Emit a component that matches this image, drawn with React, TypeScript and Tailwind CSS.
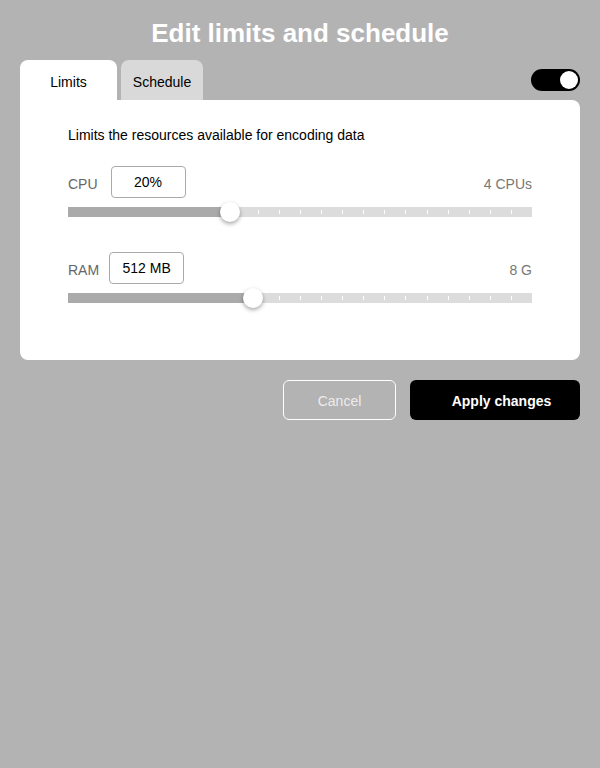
import React, { useState } from 'react'

interface LimitSlider {
    label: string
    value: string
    max: string
    position: number
    inputGap: string
}

const sliders: LimitSlider[] = [
    { label: 'CPU', value: '20%', max: '4 CPUs', position: 0.349, inputGap: 'ml-[13px]' },
    { label: 'RAM', value: '512 MB', max: '8 G', position: 0.399, inputGap: 'ml-[10px]' },
]

const TICKS = 22

function Slider({ position }: { position: number }) {
    return (
        <div className="relative h-[10px] w-full bg-[#dcdcdc]">
            <div className="absolute left-0 top-0 h-full bg-[#aaaaaa]" style={{ width: `${position * 100}%` }} />
            {Array.from({ length: TICKS - 1 }).map((_, i) => {
                const p = (i + 1) / TICKS
                if (p <= position + 0.02) return null
                return (
                    <span
                        key={i}
                        className="absolute top-[3px] h-[4px] w-px bg-white"
                        style={{ left: `${p * 100}%` }}
                    />
                )
            })}
            <span
                className="absolute top-1/2 h-5 w-5 -translate-x-1/2 -translate-y-1/2 rounded-full bg-white shadow-[0_2px_4px_rgba(0,0,0,0.35)]"
                style={{ left: `${position * 100}%` }}
            />
        </div>
    )
}

export default function App() {
    const [tab, setTab] = useState<'limits' | 'schedule'>('limits')
    const [enabled, setEnabled] = useState(true)

    return (
        <div className="min-h-[768px] w-full bg-[#b3b3b3] px-5 pt-[17px] font-['Liberation_Sans',Arial,sans-serif]">
            <h1 className="mb-[11px] text-center text-[26px] font-bold leading-8 text-white">Edit limits and schedule</h1>

            {/* Tabs + toggle */}
            <div className="flex items-center justify-between">
                <div className="flex gap-1">
                    <button
                        onClick={() => setTab('limits')}
                        className={`h-10 w-[97px] rounded-t-lg pt-[3px] text-sm text-black ${tab === 'limits' ? 'bg-white' : 'bg-[#d9d9d9]'}`}
                    >
                        Limits
                    </button>
                    <button
                        onClick={() => setTab('schedule')}
                        className={`h-10 w-[82px] rounded-t-lg pt-[3px] text-sm text-black ${tab === 'schedule' ? 'bg-white' : 'bg-[#d9d9d9]'}`}
                    >
                        Schedule
                    </button>
                </div>
                <button
                    onClick={() => setEnabled(!enabled)}
                    className={`flex h-[22px] w-[49px] items-center rounded-full bg-black px-[2px] ${enabled ? 'justify-end' : 'justify-start'}`}
                >
                    <span className="h-[18px] w-[18px] rounded-full bg-white" />
                </button>
            </div>

            {/* Card */}
            <div className="rounded-b-lg rounded-tr-lg bg-white px-12 pb-[57px] pt-[25px]">
                <p className="text-sm leading-5 text-black">Limits the resources available for encoding data</p>

                {sliders.map((s, idx) => (
                    <div key={s.label} className={idx === 0 ? 'mt-[21px]' : 'mt-[35px]'}>
                        <div className="flex items-center justify-between">
                            <div className="flex items-center">
                                <span className="pt-1 text-sm text-[#666666]">{s.label}</span>
                                <div className={`${s.inputGap} flex h-8 w-[75px] items-center justify-center rounded border border-[#aaaaaa] text-sm text-black`}>
                                    {s.value}
                                </div>
                            </div>
                            <span className="pt-1 text-sm text-[#777777]">{s.max}</span>
                        </div>
                        <div className="mt-[9px]">
                            <Slider position={s.position} />
                        </div>
                    </div>
                ))}
            </div>

            {/* Actions */}
            <div className="mt-5 flex justify-end gap-[14px]">
                <button className="h-10 w-[113px] rounded-md border border-white pt-[2px] text-sm text-[#ececec]">Cancel</button>
                <button className="h-10 w-[170px] rounded-md bg-black pl-[13px] pt-[2px] text-sm font-bold text-white">Apply changes</button>
            </div>
        </div>
    )
}
